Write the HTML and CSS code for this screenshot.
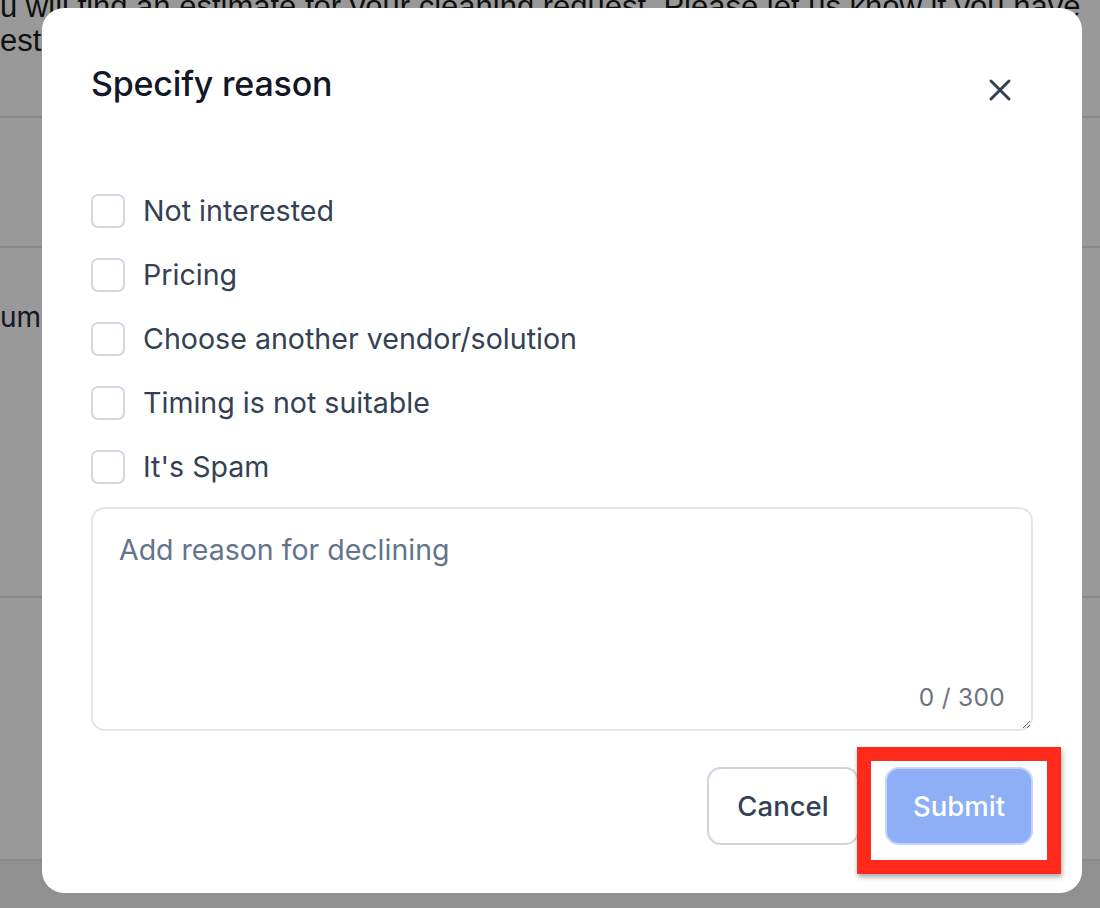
FILE: index.html
```html
<!DOCTYPE html>
<html lang="en">
<head>
<meta charset="utf-8">
<title>Specify reason</title>
<link rel="stylesheet" href="styles.css">
</head>
<body>
<div class="page">
  <div class="intro">
    <p class="intro-line">u will find an estimate for your cleaning request. Please let us know if you have</p>
    <p class="intro-line">est</p>
  </div>
  <div class="sep-row sep-row-1"></div>
  <div class="sep-row sep-row-2">
    <span class="plan-label">um</span>
  </div>
  <div class="sep-row sep-row-3"></div>
  <div class="page-footer"></div>
</div>

<div class="backdrop">
  <div class="modal" role="dialog" aria-labelledby="modal-title">
    <div class="modal-header">
      <h2 class="modal-title" id="modal-title">Specify reason</h2>
      <button class="close-btn" type="button" aria-label="Close">
        <svg viewBox="0 0 24 24" width="24" height="24" fill="none" stroke="#334155" stroke-width="3" stroke-linecap="round">
          <path d="M3 3L21 21M21 3L3 21"/>
        </svg>
      </button>
    </div>

    <div class="reason-list">
      <label class="reason"><span class="checkbox"></span><span class="reason-text">Not interested</span></label>
      <label class="reason"><span class="checkbox"></span><span class="reason-text">Pricing</span></label>
      <label class="reason"><span class="checkbox"></span><span class="reason-text">Choose another vendor/solution</span></label>
      <label class="reason"><span class="checkbox"></span><span class="reason-text">Timing is not suitable</span></label>
      <label class="reason"><span class="checkbox"></span><span class="reason-text">It's Spam</span></label>
    </div>

    <div class="note-field">
      <textarea class="note-input" placeholder="Add reason for declining"></textarea>
      <span class="note-count">0 / 300</span>
    </div>

    <div class="modal-actions">
      <button class="btn btn-cancel" type="button">Cancel</button>
      <div class="btn-wrap">
        <button class="btn btn-submit" type="button">Submit</button>
        <span class="highlight"></span>
      </div>
    </div>
  </div>
</div>
</body>
</html>
```

FILE: styles.css
```css
* { box-sizing: border-box; }

html, body {
  margin: 0;
  padding: 0;
}

body {
  width: 1100px;
  height: 908px;
  overflow: hidden;
  background: #ffffff;
  font-family: Inter, "Noto Sans", "Liberation Sans", sans-serif;
  position: relative;
}

/* ---------- page behind the overlay ---------- */
.page {
  height: 908px;
  display: flex;
  flex-direction: column;
  font-family: "Liberation Sans", Arial, sans-serif;
}

.intro {
  margin-top: -10px;
  height: 128px;
  border-bottom: 2px solid #e6e6e6;
}

.intro-line {
  margin: 0;
  font-size: 31px;
  line-height: 34px;
  color: #1a1a1a;
  white-space: nowrap;
}

.sep-row {
  border-bottom: 2px solid #e6e6e6;
}

.sep-row-1 { height: 130px; }

.sep-row-2 {
  height: 350px;
  padding-top: 52px;
}

.plan-label {
  display: block;
  font-family: Inter, "Noto Sans", sans-serif;
  font-size: 28px;
  color: #1f2937;
}

.sep-row-3 { height: 263px; }

.page-footer {
  flex: 1;
  background: #f0f0f0;
}

/* ---------- overlay ---------- */
.backdrop {
  position: absolute;
  inset: 0;
  background: rgba(0, 0, 0, 0.4);
  display: flex;
  align-items: flex-start;
  padding: 8px 0 0 42px;
}

.modal {
  width: 1040px;
  height: 885px;
  background: #ffffff;
  border-radius: 22px;
  padding: 52px 49px 0 49px;
  display: flex;
  flex-direction: column;
}

.modal-header {
  display: flex;
  justify-content: space-between;
  align-items: flex-start;
  height: 48px;
}

.modal-title {
  margin: 0;
  font-size: 34px;
  line-height: 48px;
  font-weight: 500;
  color: #111827;
  letter-spacing: -0.2px;
}

.close-btn {
  width: 48px;
  height: 48px;
  margin: 6px 9px 0 0;
  padding: 0;
  border: 0;
  background: transparent;
  display: flex;
  align-items: center;
  justify-content: center;
  cursor: pointer;
}

.reason-list {
  margin-top: 86px;
  display: flex;
  flex-direction: column;
  gap: 30px;
}

.reason {
  display: flex;
  align-items: center;
  gap: 18px;
  height: 34px;
}

.checkbox {
  width: 34px;
  height: 34px;
  border: 2px solid #d3d8e0;
  border-radius: 7px;
  background: #ffffff;
  flex: none;
}

.reason-text {
  font-size: 28.6px;
  color: #334155;
  line-height: 34px;
}

.note-field {
  position: relative;
  margin-top: 23px;
  height: 224px;
}

.note-input {
  display: block;
  width: 100%;
  height: 100%;
  border: 2px solid #e2e5ea;
  border-radius: 14px;
  padding: 21px 26px;
  font-family: Inter, "Noto Sans", sans-serif;
  font-size: 28.5px;
  line-height: 39px;
  color: #334155;
  resize: both;
  outline: none;
}

.note-input::placeholder {
  color: #64748b;
}

.note-count {
  position: absolute;
  right: 28px;
  bottom: 19px;
  font-size: 24.5px;
  line-height: 30px;
  color: #6b7280;
  letter-spacing: 0.3px;
}

.modal-actions {
  margin-top: 36px;
  display: flex;
  justify-content: flex-end;
  gap: 26px;
}

.btn {
  height: 78px;
  border-radius: 14px;
  font-family: Inter, "Noto Sans", sans-serif;
  font-size: 27.5px;
  font-weight: 500;
  cursor: pointer;
  padding: 0;
}

.btn-cancel {
  width: 152px;
  border: 2px solid #d0d5dd;
  background: #ffffff;
  color: #334155;
}

.btn-wrap {
  position: relative;
}

.btn-submit {
  width: 148px;
  border: 2px solid #c2d4fb;
  background: #8eaff6;
  color: #ffffff;
}

.highlight {
  position: absolute;
  left: -28px;
  top: -20px;
  width: 204px;
  height: 127px;
  border: 14px solid #ff2a1c;
  box-shadow: 1px 3px 5px rgba(0, 0, 0, 0.35);
  pointer-events: none;
}
```
